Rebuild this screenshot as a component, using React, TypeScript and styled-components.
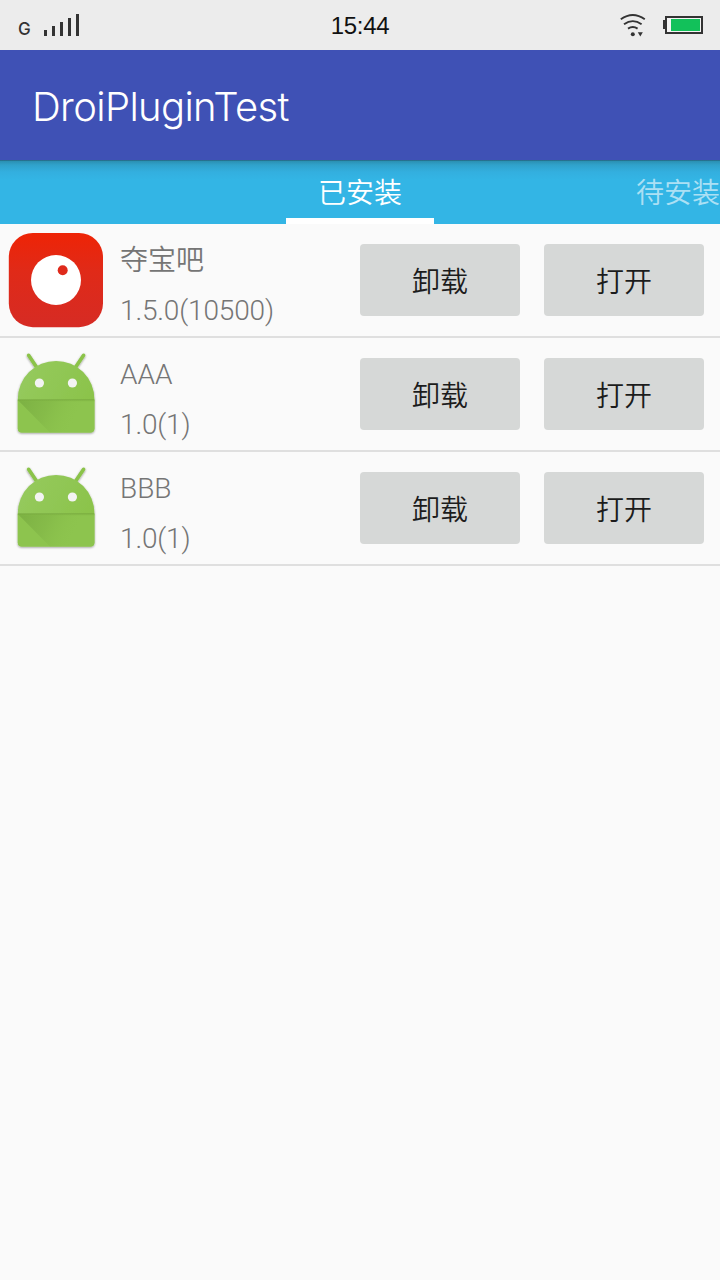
import React from "react";
import styled, { createGlobalStyle } from "styled-components";

const GlobalStyle = createGlobalStyle`
  * { box-sizing: border-box; }
  body { margin: 0; background: #fafafa; }
`;

const Screen = styled.div`
  width: 720px;
  height: 1280px;
  overflow: hidden;
  display: flex;
  flex-direction: column;
  background: #fafafa;
  font-family: Roboto, "Noto Sans CJK SC", sans-serif;
  font-weight: 350;
`;

const StatusBar = styled.header`
  height: 50px;
  flex: none;
  display: grid;
  grid-template-columns: 1fr auto 1fr;
  align-items: center;
  padding: 0 16px 2px 18px;
  background: #ececec;
  color: #333;
`;

const StatusGroup = styled.div<{ $end?: boolean }>`
  display: flex;
  align-items: center;
  gap: ${(p) => (p.$end ? "16px" : "12px")};
  justify-content: ${(p) => (p.$end ? "flex-end" : "flex-start")};
`;

const Network = styled.span`
  font: 500 17px/20px Inter, sans-serif;
  width: 14px;
  padding-top: 8px;
`;

const Clock = styled.time`
  font: 400 24px/48px "Liberation Sans", sans-serif;
  letter-spacing: -0.3px;
  color: #111;
  padding-top: 2px;
  margin-left: -2px;
`;

const AppBar = styled.div`
  height: 110px;
  flex: none;
  display: flex;
  align-items: center;
  padding: 3px 32px 0;
  background: #3f51b5;
`;

const Title = styled.h1`
  margin: 0;
  font-family: Inter, sans-serif;
  font-size: 40px;
  font-weight: 300;
  line-height: 48px;
  letter-spacing: -0.65px;
  color: #fff;
`;

const TabStrip = styled.nav`
  height: 64px;
  flex: none;
  display: grid;
  grid-template-columns: 286px 148px 1fr;
  background: linear-gradient(#24607c 0, #2b92b5 1.5px, #30a2cb 5px, #33afdf 12px, #33b5e5 20px);
`;

const Tab = styled.div<{ $active?: boolean }>`
  display: flex;
  align-items: center;
  justify-content: ${(p) => (p.$active ? "center" : "flex-end")};
  grid-column: ${(p) => (p.$active ? 2 : 3)};
  border-bottom: 6px solid ${(p) => (p.$active ? "#fff" : "transparent")};
  padding-top: 10px;
  font-size: 28px;
  line-height: 40px;
  white-space: nowrap;
  color: ${(p) => (p.$active ? "#fff" : "rgba(255,255,255,0.6)")};
`;

const List = styled.main`
  display: flex;
  flex-direction: column;
`;

const Row = styled.article`
  height: 114px;
  display: flex;
  align-items: center;
  padding: 0 16px 0 8px;
  border-bottom: 2px solid #dfdfdf;
`;

const IconBox = styled.svg`
  width: 96px;
  height: 96px;
  flex: none;
`;

const Info = styled.div`
  flex: 1;
  align-self: stretch;
  display: flex;
  flex-direction: column;
  gap: 10px;
  padding: 17px 0 0 16px;
  color: #757575;
`;

const AppName = styled.div`
  font-size: 28px;
  line-height: 40px;
  white-space: nowrap;
`;

const Version = styled.div`
  font-size: 28px;
  line-height: 40px;
  letter-spacing: -0.15px;
  white-space: nowrap;
`;

const Actions = styled.div`
  display: flex;
  gap: 24px;
`;

const Button = styled.button`
  width: 160px;
  height: 72px;
  border: 0;
  border-radius: 4px;
  padding: 5px 0 0;
  background: #d6d8d7;
  color: #1c1c1c;
  font: 350 28px/40px Roboto, "Noto Sans CJK SC", sans-serif;
`;

const SignalIcon = () => (
  <svg width="36" height="24" viewBox="0 0 36 24" fill="#333">
    <rect x="0" y="17" width="3" height="6" />
    <rect x="8" y="13" width="3" height="10" />
    <rect x="16" y="9" width="3" height="14" />
    <rect x="24" y="5" width="3" height="18" />
    <rect x="32" y="1" width="3" height="22" />
  </svg>
);

const WifiIcon = () => (
  <svg width="28" height="24" viewBox="0 0 28 24" fill="none" stroke="#333" strokeWidth="1.9">
    <path d="M1.8 6.3Q13.8-2.4 25.8 6.3" />
    <path d="M5 11.2Q13.8 5 22.6 11.2" />
    <path d="M9 15.6Q13.8 12.4 18.6 15.6" />
    <circle cx="13.8" cy="21.2" r="2" fill="#333" stroke="none" />
    <path d="M18.8 19.2h5l-2.5 4.2z" fill="#333" stroke="none" />
  </svg>
);

const BatteryIcon = () => (
  <svg width="41" height="18" viewBox="0 0 41 18">
    <rect x="0" y="4" width="3" height="9" fill="#333" />
    <rect x="3" y="1" width="36" height="16" fill="#f4f4f4" stroke="#333" strokeWidth="2" />
    <rect x="8" y="3" width="29" height="12" fill="#12c15a" />
  </svg>
);

const BallIcon = () => (
  <IconBox viewBox="0 0 96 96">
    <defs>
      <linearGradient id="ball-bg" x1="0" y1="0" x2="0" y2="1">
        <stop offset="0" stopColor="#ee2406" />
        <stop offset="0.4" stopColor="#e02a18" />
        <stop offset="1" stopColor="#d62b24" />
      </linearGradient>
    </defs>
    <rect x="0.8" y="1" width="94.2" height="94.2" rx="24" fill="url(#ball-bg)" />
    <circle cx="48" cy="48" r="25" fill="#fff" />
    <circle cx="54.7" cy="38.2" r="5" fill="#df2a1b" />
  </IconBox>
);

const RobotIcon = ({ id }: { id: string }) => (
  <IconBox viewBox="0 0 96 96">
    <defs>
      <linearGradient id={`${id}-fold`} gradientUnits="userSpaceOnUse" x1="10" y1="54" x2="64" y2="80">
        <stop offset="0" stopColor="#6fa23b" stopOpacity="0.6" />
        <stop offset="0.5" stopColor="#78ab40" stopOpacity="0.35" />
        <stop offset="1" stopColor="#8bc34a" stopOpacity="0" />
      </linearGradient>
      <linearGradient id={`${id}-crease`} x1="0" y1="0" x2="0" y2="1">
        <stop offset="0" stopColor="#6f9f38" stopOpacity="0.8" />
        <stop offset="1" stopColor="#8bc34a" stopOpacity="0" />
      </linearGradient>
      <linearGradient id={`${id}-head`} x1="0" y1="0" x2="1" y2="0.5">
        <stop offset="0.2" stopColor="#94c95b" />
        <stop offset="1" stopColor="#8bc34a" />
      </linearGradient>
      <filter id={`${id}-shadow`} x="-10%" y="-10%" width="120%" height="120%">
        <feDropShadow dx="0" dy="1" stdDeviation="0.9" floodColor="#000" floodOpacity="0.4" />
      </filter>
    </defs>
    <g filter={`url(#${id}-shadow)`}>
      <path d="M20.6 9.3 28.5 21M75.6 9.3 67.7 21" stroke="#8bc34a" strokeWidth="3.6" strokeLinecap="round" />
      <path d="M9.8 53.2a38.3 38.3 0 0 1 76.6 0V82.5a4 4 0 0 1-4 4H13.8a4 4 0 0 1-4-4z" fill={`url(#${id}-head)`} />
    </g>
    <path d="M9.8 54H86.4V82.5a4 4 0 0 1-4 4H13.8a4 4 0 0 1-4-4z" fill="#8dc44e" />
    <path d="M9.8 54H86.4V82.5a4 4 0 0 1-4 4H42z" fill={`url(#${id}-fold)`} />
    <rect x="9.8" y="53.4" width="76.6" height="2.8" fill={`url(#${id}-crease)`} />
    <circle cx="31.4" cy="37" r="4.6" fill="#f3f3f3" />
    <circle cx="64.4" cy="37" r="4.6" fill="#f3f3f3" />
  </IconBox>
);

const apps = [
  { name: "夺宝吧", version: "1.5.0(10500)", icon: <BallIcon /> },
  { name: "AAA", version: "1.0(1)", icon: <RobotIcon id="aaa" /> },
  { name: "BBB", version: "1.0(1)", icon: <RobotIcon id="bbb" /> },
];

export default function App() {
  return (
    <>
      <GlobalStyle />
      <Screen>
        <StatusBar>
          <StatusGroup>
            <Network>G</Network>
            <SignalIcon />
          </StatusGroup>
          <Clock>15:44</Clock>
          <StatusGroup $end>
            <WifiIcon />
            <BatteryIcon />
          </StatusGroup>
        </StatusBar>
        <AppBar>
          <Title>DroiPluginTest</Title>
        </AppBar>
        <TabStrip>
          <Tab $active>已安装</Tab>
          <Tab>待安装</Tab>
        </TabStrip>
        <List>
          {apps.map((app) => (
            <Row key={app.name}>
              {app.icon}
              <Info>
                <AppName>{app.name}</AppName>
                <Version>{app.version}</Version>
              </Info>
              <Actions>
                <Button>卸载</Button>
                <Button>打开</Button>
              </Actions>
            </Row>
          ))}
        </List>
      </Screen>
    </>
  );
}
